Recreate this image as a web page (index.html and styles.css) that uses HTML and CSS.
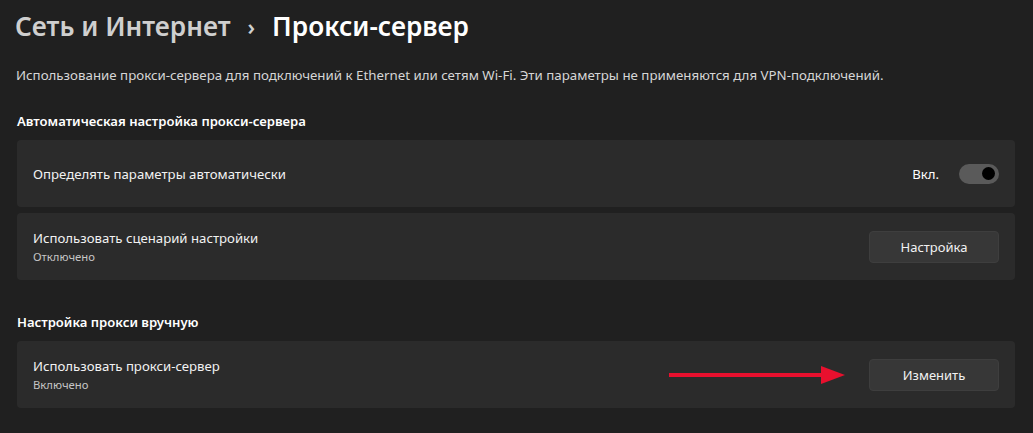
FILE: index.html
```html
<!DOCTYPE html>
<html lang="ru">
<head>
  <meta charset="UTF-8" />
  <title>Прокси-сервер</title>
  <link rel="stylesheet" href="styles.css">
</head>
<body>
  <div class="page">
    <h1 class="crumbs">
      <span class="parent">Сеть и Интернет</span>
      <span class="sep">›</span>
      <span class="current">Прокси-сервер</span>
    </h1>

    <p class="intro">Использование прокси-сервера для подключений к Ethernet или сетям Wi-Fi. Эти параметры не применяются для VPN-подключений.</p>

    <h2 class="section">Автоматическая настройка прокси-сервера</h2>
    <div class="card">
      <div class="label">Определять параметры автоматически</div>
      <div class="action">
        <span class="state">Вкл.</span>
        <span class="toggle"><span class="knob"></span></span>
      </div>
    </div>
    <div class="card">
      <div class="label">
        Использовать сценарий настройки
        <div class="sub">Отключено</div>
      </div>
      <button class="btn">Настройка</button>
    </div>

    <h2 class="section second">Настройка прокси вручную</h2>
    <div class="card">
      <div class="label">
        Использовать прокси-сервер
        <div class="sub">Включено</div>
      </div>
      <div class="action">
        <svg class="arrow" width="178" height="18" viewBox="0 0 178 18">
          <line x1="0" y1="9" x2="154" y2="9" stroke="#e8102e" stroke-width="4" />
          <polygon points="152,0 176,9 152,18" fill="#e8102e" />
        </svg>
        <button class="btn">Изменить</button>
      </div>
    </div>
  </div>
</body>
</html>
```

FILE: styles.css
```css
body {
  margin: 0;
  background: #202020;
  color: #fff;
  font-family: 'Noto Sans', 'Open Sans', sans-serif;
}
.page {
  padding: 6px 18px 0 17px;
}
.crumbs {
  margin: 0 0 0 -2px;
  font-size: 26.2px;
  font-weight: 600;
  line-height: 40px;
  display: flex;
  align-items: center;
  gap: 17px;
}
.parent {
  color: #cfcfcf;
}
.sep {
  font-size: 22px;
  color: #cfcfcf;
}
.current {
  color: #fff;
}
.intro {
  margin: 20px 0 0 -1px;
  font-size: 13.3px;
  color: #d6d6d6;
}
.section {
  margin: 28px 0 10px;
  font-size: 13.1px;
  font-weight: 600;
}
.section.second {
  margin-top: 33px;
}
.card {
  background: #2b2b2b;
  border-radius: 4px;
  height: 67px;
  margin-bottom: 6px;
  padding: 0 16px;
  display: flex;
  align-items: center;
  justify-content: space-between;
  box-sizing: border-box;
}
.label {
  font-size: 13.2px;
  color: #f2f2f2;
}
.sub {
  font-size: 11.3px;
  color: #c5c5c5;
  margin-top: 2px;
}
.action {
  display: flex;
  align-items: center;
}
.state {
  font-size: 13.2px;
  margin-right: 20px;
}
.toggle {
  width: 40px;
  height: 20px;
  border-radius: 10px;
  background: #5a5a5a;
  display: flex;
  align-items: center;
  justify-content: flex-end;
  padding-right: 4px;
  box-sizing: border-box;
}
.knob {
  width: 13px;
  height: 13px;
  border-radius: 50%;
  background: #000;
}
.btn {
  width: 130px;
  height: 32px;
  background: #373737;
  border: 1px solid #3e3e3e;
  border-radius: 4px;
  color: #f2f2f2;
  font-family: inherit;
  font-size: 13px;
}
.arrow {
  margin-right: 22px;
}
```
